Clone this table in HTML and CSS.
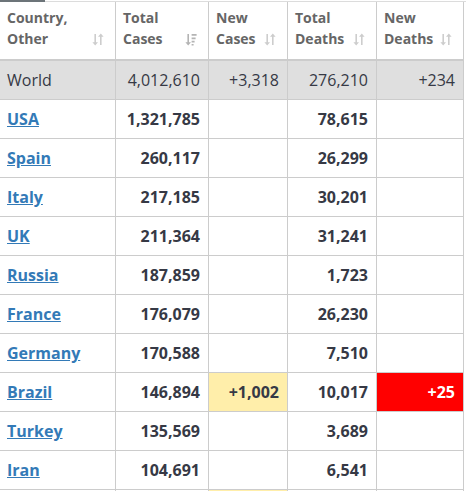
FILE: index.html
```html
<!DOCTYPE html>
<html lang="en">
<head>
    <meta charset="UTF-8">
    <meta name="viewport" content="width=device-width, initial-scale=1.0">
    <title>Coronavirus Cases</title>
    <link rel="stylesheet" href="styles.css">
</head>
<body>

<div class="tabstrip"><div class="tab-active"></div></div>

<table class="countries">
    <colgroup>
        <col class="col-country">
        <col class="col-total">
        <col class="col-new">
        <col class="col-deaths">
        <col class="col-newdeaths">
    </colgroup>
    <thead>
        <tr>
            <th><div class="th-inner"><span>Country,<br>Other</span><svg class="sort" viewBox="0 0 12 13"><path d="M2.4 1h1.6v8.2h2L3.2 12.6 0.4 9.2h2z M8 12h1.6V3.8h2L8.8 0.4 6 3.8h2z"/></svg></div></th>
            <th><div class="th-inner"><span>Total<br>Cases</span><svg class="sort active" viewBox="0 0 12 13"><path d="M2.4 1h1.6v8.2h2L3.2 12.6 0.4 9.2h2z M6.6 1h5v1.8h-5z M6.6 4.4h4v1.8h-4z M6.6 7.8h3v1.8h-3z M6.6 11h2v1.6h-2z"/></svg></div></th>
            <th><div class="th-inner"><span>New<br>Cases</span><svg class="sort" viewBox="0 0 12 13"><path d="M2.4 1h1.6v8.2h2L3.2 12.6 0.4 9.2h2z M8 12h1.6V3.8h2L8.8 0.4 6 3.8h2z"/></svg></div></th>
            <th><div class="th-inner"><span>Total<br>Deaths</span><svg class="sort" viewBox="0 0 12 13"><path d="M2.4 1h1.6v8.2h2L3.2 12.6 0.4 9.2h2z M8 12h1.6V3.8h2L8.8 0.4 6 3.8h2z"/></svg></div></th>
            <th><div class="th-inner"><span>New<br>Deaths</span><svg class="sort" viewBox="0 0 12 13"><path d="M2.4 1h1.6v8.2h2L3.2 12.6 0.4 9.2h2z M8 12h1.6V3.8h2L8.8 0.4 6 3.8h2z"/></svg></div></th>
        </tr>
    </thead>
    <tbody>
        <tr class="total-row">
            <td class="name">World</td>
            <td>4,012,610</td>
            <td>+3,318</td>
            <td>276,210</td>
            <td>+234</td>
        </tr>
        <tr>
            <td class="name"><a href="#">USA</a></td>
            <td>1,321,785</td>
            <td></td>
            <td>78,615</td>
            <td></td>
        </tr>
        <tr>
            <td class="name"><a href="#">Spain</a></td>
            <td>260,117</td>
            <td></td>
            <td>26,299</td>
            <td></td>
        </tr>
        <tr>
            <td class="name"><a href="#">Italy</a></td>
            <td>217,185</td>
            <td></td>
            <td>30,201</td>
            <td></td>
        </tr>
        <tr>
            <td class="name"><a href="#">UK</a></td>
            <td>211,364</td>
            <td></td>
            <td>31,241</td>
            <td></td>
        </tr>
        <tr>
            <td class="name"><a href="#">Russia</a></td>
            <td>187,859</td>
            <td></td>
            <td>1,723</td>
            <td></td>
        </tr>
        <tr>
            <td class="name"><a href="#">France</a></td>
            <td>176,079</td>
            <td></td>
            <td>26,230</td>
            <td></td>
        </tr>
        <tr>
            <td class="name"><a href="#">Germany</a></td>
            <td>170,588</td>
            <td></td>
            <td>7,510</td>
            <td></td>
        </tr>
        <tr>
            <td class="name"><a href="#">Brazil</a></td>
            <td>146,894</td>
            <td class="new-cases">+1,002</td>
            <td>10,017</td>
            <td class="new-deaths">+25</td>
        </tr>
        <tr>
            <td class="name"><a href="#">Turkey</a></td>
            <td>135,569</td>
            <td></td>
            <td>3,689</td>
            <td></td>
        </tr>
        <tr>
            <td class="name"><a href="#">Iran</a></td>
            <td>104,691</td>
            <td></td>
            <td>6,541</td>
            <td></td>
        </tr>
        <tr>
            <td class="name"><a href="#">China</a></td>
            <td>82,887</td>
            <td class="new-cases">+1</td>
            <td>4,633</td>
            <td></td>
        </tr>
    </tbody>
</table>

</body>
</html>
```

FILE: styles.css
```css
body {
    margin: 0;
    font-family: "Open Sans", Arial, sans-serif;
    color: #363945;
    background: #fff;
}

/* Cropped tab strip above the table */
.tabstrip {
    height: 1px;
    border-bottom: 1px solid #dcdcdc;
}
.tab-active {
    width: 45px;
    height: 2px;
    background-color: #6c7479;
}

.countries {
    table-layout: fixed;
    width: 464px;
    border-collapse: separate;
    border-spacing: 0;
}
.col-country { width: 116px; }
.col-total { width: 93px; }
.col-new { width: 79px; }
.col-deaths { width: 89px; }
.col-newdeaths { width: 87px; }

th, td {
    box-sizing: border-box;
    border-right: 1px solid #ccc;
    border-bottom: 1px solid #ccc;
}

th {
    height: 59px;
    padding: 5px 11px 0 7px;
    border-bottom-width: 2px;
    vertical-align: top;
    text-align: left;
    font-size: 14px;
    font-weight: bold;
    line-height: 21px;
    color: #666;
}
.th-inner {
    display: flex;
    justify-content: space-between;
    align-items: flex-end;
}
.sort {
    width: 12px;
    height: 13px;
    margin-bottom: 3px;
    fill: #cdcdcd;
}
.sort.active {
    fill: #b4b4b4;
}

td {
    height: 39px;
    padding: 0 8px 0 7px;
    text-align: right;
    font-size: 16px;
    font-weight: bold;
    white-space: nowrap;
}
td.name {
    text-align: left;
}
td a {
    color: #337ab7;
    text-decoration: underline;
}

.total-row td {
    background-color: #dfdfdf;
    font-weight: normal;
}

.new-cases {
    background-color: #ffeeaa;
}
.new-deaths {
    background-color: #ff0000;
    color: #fff;
}
```
